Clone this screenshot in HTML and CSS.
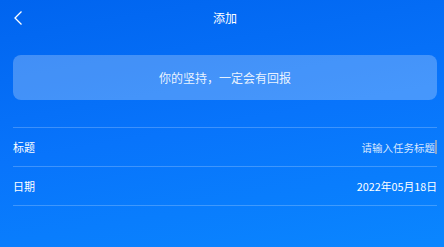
FILE: index.html
```html
<!DOCTYPE html>
<html lang="zh">
<head>
<meta charset="utf-8">
<link rel="stylesheet" href="styles.css">
</head>
<body>
<div class="page">
  <header class="nav">
    <span class="back">
      <svg width="12" height="16" viewBox="0 0 12 16"><path d="M8.5 1.5 L2 8 L8.5 14.5" fill="none" stroke="#fff" stroke-width="1.3"/></svg>
    </span>
    <span class="nav-title">添加</span>
  </header>
  <div class="banner">你的坚持，一定会有回报</div>
  <div class="form">
    <div class="row">
      <span class="label">标题</span>
      <span class="value placeholder">请输入任务标题<span class="cursor"></span></span>
    </div>
    <div class="row">
      <span class="label">日期</span>
      <span class="value date">2022年05月18日</span>
    </div>
  </div>
</div>
</body>
</html>
```
FILE: styles.css
```css
html, body {
  margin: 0;
  height: 100%;
}
body {
  background: linear-gradient(170deg, #0064ef 0%, #0874fb 50%, #0a86ff 100%);
  font-family: "Noto Sans CJK SC", "Noto Sans", sans-serif;
  color: #fff;
}
.page {
  padding: 0 7px 0 13px;
}
.nav {
  height: 36px;
  display: flex;
  align-items: center;
  justify-content: center;
  position: relative;
}
.back {
  position: absolute;
  left: 0;
  top: 10px;
  display: flex;
}
.nav-title {
  font-size: 12px;
  line-height: 16px;
}
.banner {
  margin-top: 19px;
  height: 45px;
  border-radius: 8px;
  background: rgba(255, 255, 255, 0.25);
  display: flex;
  align-items: center;
  justify-content: center;
  font-size: 12px;
  color: rgba(255, 255, 255, 0.9);
}
.form {
  margin-top: 27px;
  border-top: 1px solid rgba(255, 255, 255, 0.22);
}
.row {
  height: 38px;
  border-bottom: 1px solid rgba(255, 255, 255, 0.22);
  display: flex;
  align-items: center;
  justify-content: space-between;
  font-size: 11px;
}
.value {
  display: flex;
  align-items: center;
}
.placeholder {
  font-size: 10.5px;
  color: rgba(255, 255, 255, 0.85);
}
.date {
  font-size: 10.8px;
}
.cursor {
  width: 2px;
  height: 14px;
  background: #8aa6c8;
}
```
